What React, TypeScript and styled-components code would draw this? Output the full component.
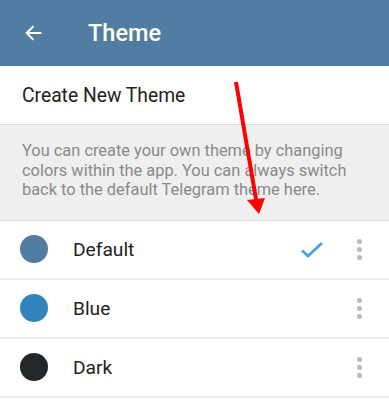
import React from "react";
import styled, { createGlobalStyle } from "styled-components";

const GlobalStyle = createGlobalStyle`
  body {
    margin: 0;
    background: #ffffff;
    font-family: Roboto, "Noto Sans", sans-serif;
  }
`;

const Screen = styled.div`
  position: relative;
  width: 389px;
  height: 400px;
  overflow: hidden;
  background: #ffffff;
`;

const Header = styled.header`
  height: 66px;
  background: #527da3;
  display: flex;
  align-items: center;
  padding-left: 22px;
  color: #ffffff;
`;

const BackButton = styled.div`
  width: 24px;
  height: 24px;
  display: flex;
  align-items: center;
  justify-content: center;
  margin-right: 42px;
`;

const Title = styled.h1`
  margin: 0;
  font-size: 23.5px;
  font-weight: 500;
`;

const CreateRow = styled.div`
  height: 58px;
  display: flex;
  align-items: center;
  padding-left: 22px;
  font-size: 19.3px;
  color: #222222;
  border-bottom: 1px solid #dcdcdc;
`;

const Info = styled.div`
  background: #efefef;
  padding: 16px 22px 20px 22px;
  font-size: 16.4px;
  line-height: 19.5px;
  color: #8a8a8a;
  border-bottom: 1px solid #e2e2e2;
`;

const ThemeRow = styled.div`
  height: 57px;
  display: flex;
  align-items: center;
  padding: 0 20px;
  border-bottom: 2px solid #ececec;
`;

const Swatch = styled.div<{ $color: string }>`
  width: 28px;
  height: 28px;
  border-radius: 50%;
  background: ${(p) => p.$color};
  margin-right: 25px;
  flex-shrink: 0;
`;

const Name = styled.span`
  flex: 1;
  font-size: 19.2px;
  color: #222222;
`;

const Check = styled.div`
  width: 24px;
  height: 24px;
  display: flex;
  align-items: center;
  justify-content: center;
  margin-right: 33px;
`;

const Dots = styled.div`
  display: flex;
  flex-direction: column;
  gap: 3px;
  margin-right: 7px;

  & span {
    width: 5px;
    height: 5px;
    border-radius: 50%;
    background: #b5bac1;
  }
`;

const Annotation = styled.svg`
  position: absolute;
  left: 0;
  top: 0;
  pointer-events: none;
`;

const themes = [
  { name: "Default", color: "#527da3", active: true },
  { name: "Blue", color: "#3384bd", active: false },
  { name: "Dark", color: "#22272a", active: false },
];

const App: React.FC = () => {
  return (
    <Screen>
      <GlobalStyle />
      <Header>
        <BackButton>
          <svg width="22" height="22" viewBox="0 0 24 24">
            <path d="M20 12H4.5M11.5 4.5L4 12l7.5 7.5" stroke="#fff" strokeWidth="2.2" fill="none" />
          </svg>
        </BackButton>
        <Title>Theme</Title>
      </Header>
      <CreateRow>Create New Theme</CreateRow>
      <Info>
        You can create your own theme by changing colors within the app. You can always switch back to the
        default Telegram theme here.
      </Info>
      {themes.map((t) => (
        <ThemeRow key={t.name}>
          <Swatch $color={t.color} />
          <Name>{t.name}</Name>
          {t.active && (
            <Check>
              <svg width="24" height="19" viewBox="0 0 24 19">
                <path d="M2 10.5l6 5.5L22 3" stroke="#4aa3e4" strokeWidth="2.8" fill="none" />
              </svg>
            </Check>
          )}
          <Dots>
            <span />
            <span />
            <span />
          </Dots>
        </ThemeRow>
      ))}
      <Annotation width="389" height="400">
        <line x1="236" y1="82" x2="257" y2="205" stroke="#ff0000" strokeWidth="4" />
        <polygon points="247,200 265,198 259,214" fill="#ff0000" />
      </Annotation>
    </Screen>
  );
};

export default App;
